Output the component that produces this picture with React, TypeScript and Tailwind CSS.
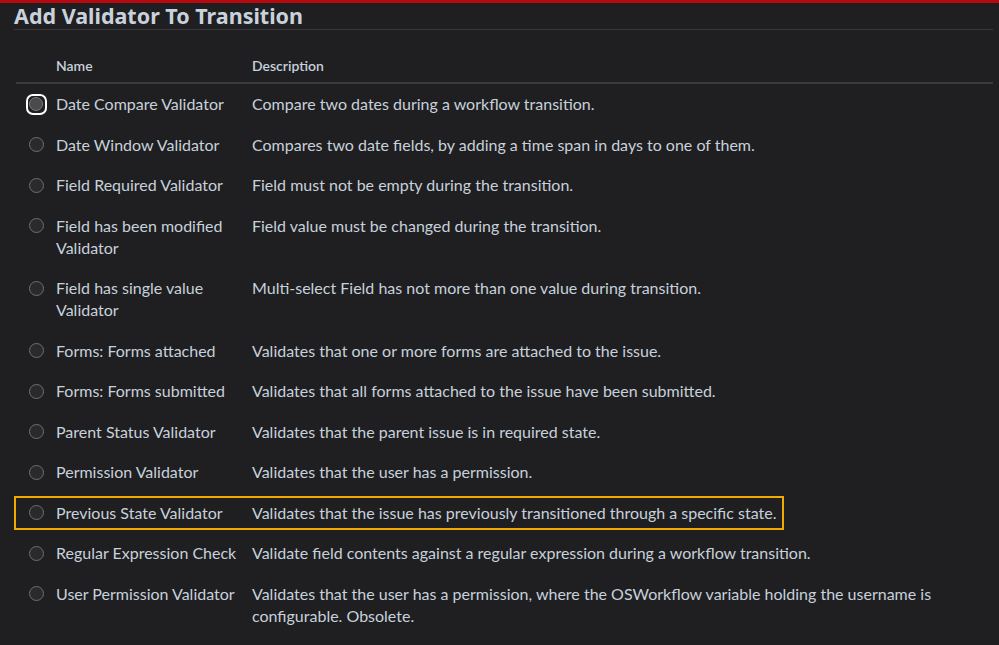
const rows: { name: string[]; desc: string[] }[] = [
  { name: ["Date Compare Validator"], desc: ["Compare two dates during a workflow transition."] },
  { name: ["Date Window Validator"], desc: ["Compares two date fields, by adding a time span in days to one of them."] },
  { name: ["Field Required Validator"], desc: ["Field must not be empty during the transition."] },
  { name: ["Field has been modified", "Validator"], desc: ["Field value must be changed during the transition."] },
  { name: ["Field has single value", "Validator"], desc: ["Multi-select Field has not more than one value during transition."] },
  { name: ["Forms: Forms attached"], desc: ["Validates that one or more forms are attached to the issue."] },
  { name: ["Forms: Forms submitted"], desc: ["Validates that all forms attached to the issue have been submitted."] },
  { name: ["Parent Status Validator"], desc: ["Validates that the parent issue is in required state."] },
  { name: ["Permission Validator"], desc: ["Validates that the user has a permission."] },
  { name: ["Previous State Validator"], desc: ["Validates that the issue has previously transitioned through a specific state."] },
  { name: ["Regular Expression Check"], desc: ["Validate field contents against a regular expression during a workflow transition."] },
  {
    name: ["User Permission Validator"],
    desc: ["Validates that the user has a permission, where the OSWorkflow variable holding the username is", "configurable. Obsolete."],
  },
];

const Radio = ({ focused }: { focused?: boolean }) => (
  <span className={focused ? "flex h-[21px] w-[21px] items-center justify-center rounded-[7px] border-2 border-white" : "flex h-[21px] w-[21px] items-center justify-center"}>
    <span className={focused ? "block h-[14px] w-[14px] rounded-full border-[1.5px] border-[#7a7a7a] bg-[#4a4a4c]" : "block h-[15px] w-[15px] rounded-full border-[1.5px] border-[#6e6e70] bg-[#2a2a2c]"} />
  </span>
);

export default function App() {
  return (
    <div className="min-h-[645px] w-[999px] overflow-hidden bg-[#1f1f21] text-[#c7d1db]" style={{ fontFamily: "Lato, 'Noto Sans', sans-serif" }}>
      <div className="h-[3px] bg-[#b8090f]" />
      <div className="mx-[14px] mr-[6px]">
        <h1
          className="border-b border-[#38383b] pb-[1px] text-[21.5px] leading-[25px] font-bold text-[#c9d2dc]"
          style={{ fontFamily: "'Noto Sans', sans-serif" }}
        >
          Add Validator To Transition
        </h1>
        <div className="ml-[2px]">
          <div className="flex border-b-2 border-[#3a3a3d] pt-[25px] pb-[5px] text-[14px] leading-[22px] font-semibold">
            <div className="w-[40px]" />
            <div className="w-[196px]">Name</div>
            <div className="flex-1">Description</div>
          </div>
          {rows.map((r, i) => (
            <div key={i} className="relative flex py-[9.25px] text-[16px] leading-[22px]">
              {i === 9 && (
                <span className="pointer-events-none absolute top-[3px] bottom-[3px] -left-[2px] w-[770px] border-2 border-[#f2a900]" />
              )}
              <div className="flex w-[40px] justify-center pt-[0.5px]">
                <Radio focused={i === 0} />
              </div>
              <div className="w-[196px]">
                {r.name.map((n) => (
                  <div key={n}>{n}</div>
                ))}
              </div>
              <div className="flex-1">
                {r.desc.map((d) => (
                  <div key={d}>{d}</div>
                ))}
              </div>
            </div>
          ))}
        </div>
      </div>
    </div>
  );
}
